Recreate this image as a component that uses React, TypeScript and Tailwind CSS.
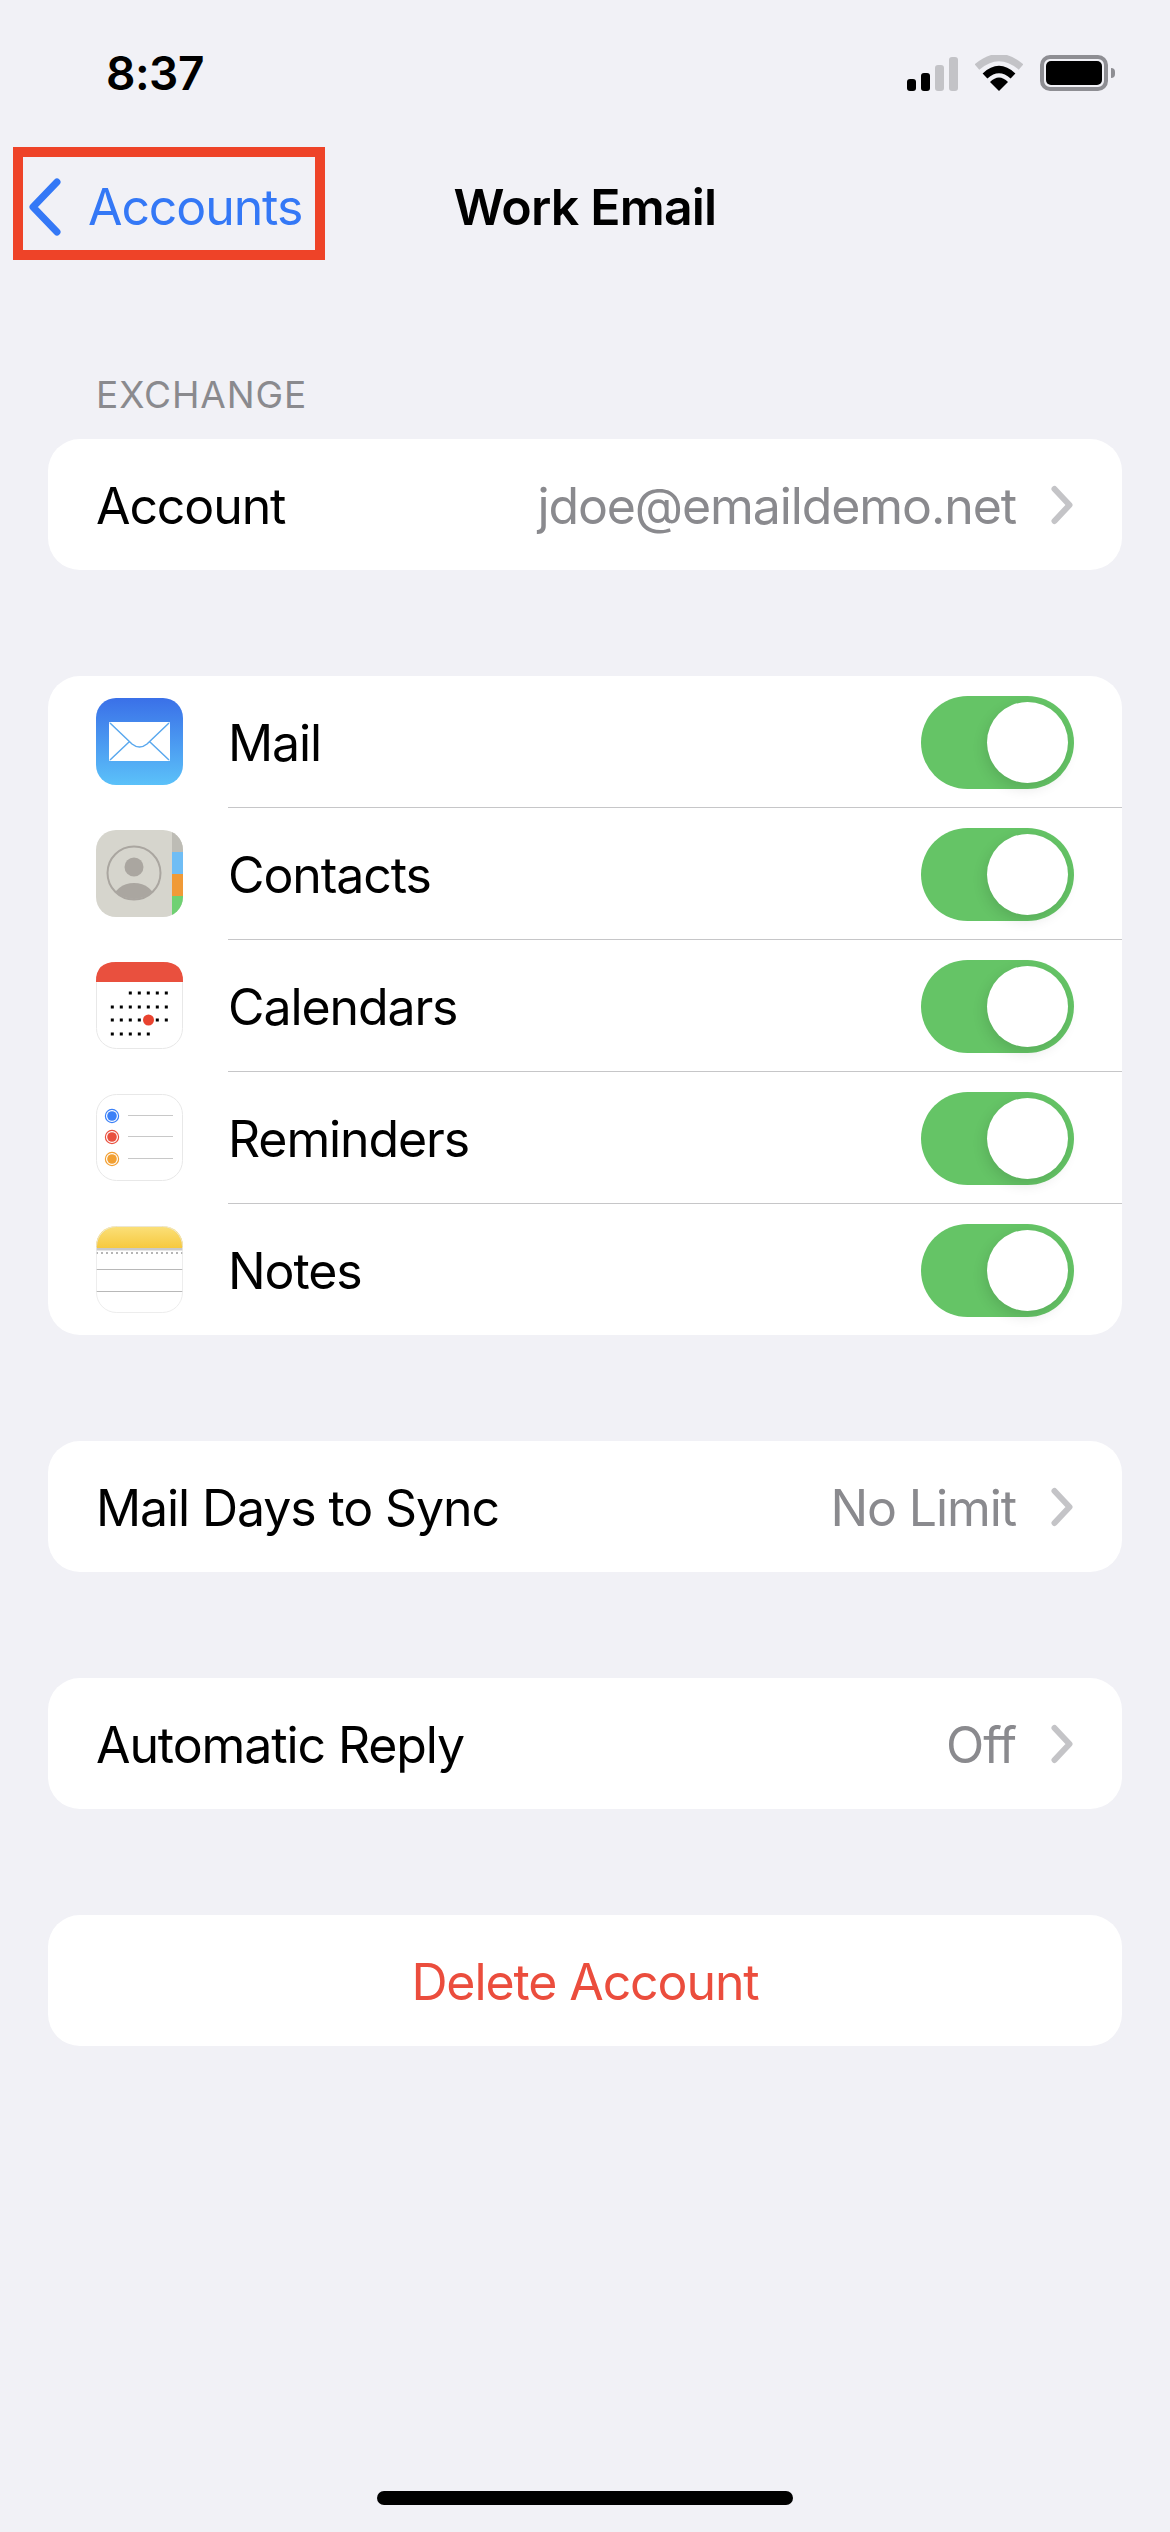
import React from "react";

type ToggleItem = {
  label: string;
  icon: React.ReactNode;
};

function MailIcon() {
  return (
    <svg viewBox="0 0 87 87" className="w-[87px] h-[87px] shrink-0 -mt-[1px]">
      <defs>
        <linearGradient id="mailBg" x1="0" y1="0" x2="0" y2="1">
          <stop offset="0" stopColor="#3a70e8" />
          <stop offset="1" stopColor="#5bc1f9" />
        </linearGradient>
      </defs>
      <rect width="87" height="87" rx="20" fill="url(#mailBg)" />
      <rect x="13" y="24" width="61" height="39" rx="1" fill="#fff" />
      <path
        d="M14 25 L36 46 Q43.500 52 51 46 L73 25 M14 62 L33 44 M73 62 L54 44"
        fill="none"
        stroke="#5aa8ee"
        strokeWidth="1.500"
      />
    </svg>
  );
}

function ContactsIcon() {
  return (
    <svg viewBox="0 0 87 87" className="w-[87px] h-[87px] shrink-0 -mt-[1px]">
      <defs>
        <clipPath id="contactsClip">
          <rect width="87" height="87" rx="20" />
        </clipPath>
        <clipPath id="faceClip">
          <circle cx="38" cy="43" r="26" />
        </clipPath>
      </defs>
      <g clipPath="url(#contactsClip)">
        <rect width="87" height="87" fill="#d6d5cd" />
        <rect x="76" y="0" width="11" height="22" fill="#bdbcb5" />
        <rect x="76" y="22" width="11" height="22" fill="#6fbdf5" />
        <rect x="76" y="44" width="11" height="22" fill="#f09a37" />
        <rect x="76" y="66" width="11" height="21" fill="#6fd172" />
      </g>
      <circle cx="38" cy="43" r="26.500" fill="none" stroke="#aaa6a0" strokeWidth="2" />
      <circle cx="38" cy="37" r="9.500" fill="#aaa6a0" />
      <ellipse cx="38" cy="70" rx="21" ry="17" fill="#aaa6a0" clipPath="url(#faceClip)" />
    </svg>
  );
}

function CalendarsIcon() {
  const rows = [
    { y: 31, cols: [34.3, 43.3, 52.3, 61.3, 70.3] },
    { y: 45, cols: [16.3, 25.3, 34.3, 43.3, 52.3, 61.3, 70.3] },
    { y: 58, cols: [16.3, 25.3, 34.3, 43.3, 61.3, 70.3] },
    { y: 72, cols: [16.3, 25.3, 34.3, 43.3, 52.3] },
  ];
  return (
    <svg viewBox="0 0 87 87" className="w-[87px] h-[87px] shrink-0 -mt-[1px]">
      <defs>
        <clipPath id="calClip">
          <rect width="87" height="87" rx="20" />
        </clipPath>
      </defs>
      <g clipPath="url(#calClip)">
        <rect width="87" height="87" fill="#fff" />
        <rect width="87" height="20" fill="#e9503e" />
      </g>
      <rect x="0.500" y="0.500" width="86" height="86" rx="20" fill="none" stroke="#e8e8e8" />
      <path d="M0 20 V19 Q0 0 20 0 H67 Q87 0 87 19 V20 Z" fill="#e9503e" />
      {rows.map((row) =>
        row.cols.map((x) => (
          <rect key={`${row.y}-${x}`} x={x - 1.500} y={row.y - 1.500} width="3" height="3" fill="#000" />
        ))
      )}
      <circle cx="52.500" cy="58" r="5.500" fill="#e9432f" />
    </svg>
  );
}

function RemindersIcon() {
  const dots = [
    { y: 22, color: "#3b80f7" },
    { y: 43, color: "#e9503e" },
    { y: 65, color: "#f2a033" },
  ];
  return (
    <svg viewBox="0 0 87 87" className="w-[87px] h-[87px] shrink-0 -mt-[1px]">
      <rect x="0.500" y="0.500" width="86" height="86" rx="20" fill="#fff" stroke="#e8e8e8" />
      {dots.map((d) => (
        <g key={d.y}>
          <circle cx="16" cy={d.y} r="6.600" fill="none" stroke={d.color} strokeWidth="1.200" />
          <circle cx="16" cy={d.y} r="4.800" fill={d.color} />
          <line x1="32" x2="77" y1={d.y - 0.500} y2={d.y - 0.500} stroke="#c8c8c8" strokeWidth="1" />
        </g>
      ))}
    </svg>
  );
}

function NotesIcon() {
  return (
    <svg viewBox="0 0 87 87" className="w-[87px] h-[87px] shrink-0 -mt-[1px]">
      <defs>
        <linearGradient id="notesBg" x1="0" y1="0" x2="0" y2="1">
          <stop offset="0" stopColor="#fbe07a" />
          <stop offset="1" stopColor="#f6c93f" />
        </linearGradient>
        <clipPath id="notesClip">
          <rect width="87" height="87" rx="20" />
        </clipPath>
      </defs>
      <g clipPath="url(#notesClip)">
        <rect width="87" height="87" fill="#fff" />
        <rect width="87" height="22" fill="url(#notesBg)" />
        <rect y="22" width="87" height="2.500" fill="#c9c9c9" />
        <line x1="0" x2="87" y1="27" y2="27" stroke="#b5b5b5" strokeWidth="2" strokeDasharray="2 3" />
        <line x1="0" x2="87" y1="43.500" y2="43.500" stroke="#b8b8b8" strokeWidth="1" />
        <line x1="0" x2="87" y1="65.500" y2="65.500" stroke="#b8b8b8" strokeWidth="1" />
      </g>
      <rect x="0.500" y="0.500" width="86" height="86" rx="20" fill="none" stroke="#e8e8e8" strokeOpacity="0.800" />
    </svg>
  );
}

function Toggle() {
  return (
    <div className="relative w-[153px] h-[93px] rounded-full bg-[#65c466] shrink-0">
      <div className="absolute left-[66px] top-[6px] w-[81px] h-[81px] rounded-full bg-white shadow-[-2px_5px_14px_rgba(0,0,0,0.12)]" />
    </div>
  );
}

function Chevron() {
  return (
    <svg viewBox="0 0 24 40" className="w-[24px] h-[40px] shrink-0 ml-[34px]">
      <path
        d="M4.500 4 L19.500 20 L4.500 36"
        fill="none"
        stroke="#c4c4c7"
        strokeWidth="6"
        strokeLinecap="round"
        strokeLinejoin="round"
      />
    </svg>
  );
}

function LinkRow({ label, value }: { label: string; value: string }) {
  return (
    <div className="flex items-center h-[131px] rounded-[32px] bg-white pl-[48px] pr-[48px]">
      <span className="pt-[2px] text-black">{label}</span>
      <span className="pt-[2px] ml-auto text-[#8a8a8e]">{value}</span>
      <Chevron />
    </div>
  );
}

const toggles: ToggleItem[] = [
  { label: "Mail", icon: <MailIcon /> },
  { label: "Contacts", icon: <ContactsIcon /> },
  { label: "Calendars", icon: <CalendarsIcon /> },
  { label: "Reminders", icon: <RemindersIcon /> },
  { label: "Notes", icon: <NotesIcon /> },
];

export default function App() {
  return (
    <div
      className="relative flex flex-col w-[1170px] min-h-[2532px] bg-[#f1f1f6] text-[50px] tracking-[-1.1px] leading-[60px]"
      style={{ fontFamily: "Inter, 'Liberation Sans', sans-serif" }}
    >
      {/* status bar */}
      <div className="flex items-center justify-between h-[146px] pl-[106px] pr-[55px]">
        <span className="text-[46px] font-semibold tracking-[-0.5px] text-black">8:37</span>
        <div className="flex items-end gap-[17px]">
          <div className="flex items-end gap-[5px]">
            <div className="w-[9px] h-[12px] rounded-[3px] bg-black" />
            <div className="w-[9px] h-[18px] rounded-[3px] bg-black" />
            <div className="w-[9px] h-[26px] rounded-[3px] bg-[#c3c3c7]" />
            <div className="w-[9px] h-[34px] rounded-[3px] bg-[#c3c3c7]" />
          </div>
          <svg viewBox="0 0 48 36" className="w-[48px] h-[36px]">
            <path d="M2 12 Q24 -7 46 12" fill="none" stroke="#c3c3c7" strokeWidth="7" />
            <path d="M10 21 Q24 8 38 21" fill="none" stroke="#000" strokeWidth="7" />
            <path d="M15 27 Q24 18 33 27 L24 36 Z" fill="#000" />
          </svg>
          <div className="flex items-center gap-[3px]">
            <div className="w-[68px] h-[36px] rounded-[10px] border-[4px] border-[#8e8e93] p-[2px]">
              <div className="w-full h-full rounded-[5px] bg-black" />
            </div>
            <div className="w-[4px] h-[10px] rounded-r-full bg-[#8e8e93]" />
          </div>
        </div>
      </div>

      {/* nav bar */}
      <div className="grid grid-cols-[1fr_auto_1fr] items-center h-[122px] px-[28px]">
        <div className="flex items-center gap-[26px] text-[#3478f6]">
          <svg viewBox="0 0 34 58" className="w-[34px] h-[58px] shrink-0">
            <path
              d="M29 4 L5 29 L29 54"
              fill="none"
              stroke="#3478f6"
              strokeWidth="7"
              strokeLinecap="round"
              strokeLinejoin="round"
            />
          </svg>
          <span>Accounts</span>
        </div>
        <span className="font-semibold tracking-[-0.8px] text-black">Work Email</span>
        <div />
      </div>

      {/* highlight round the back button */}
      <div className="absolute left-[13px] top-[147px] w-[312px] h-[113px] border-[10px] border-[#ee4328]" />

      <div className="flex flex-col px-[48px] pt-[104px]">
        <div className="h-[67px] pl-[48px] pt-[1px] text-[37px] leading-[44px] tracking-[0.9px] text-[#8a8a8e]">EXCHANGE</div>
        <LinkRow label="Account" value="jdoe@emaildemo.net" />

        <div className="flex flex-col mt-[106px] rounded-[32px] bg-white overflow-hidden">
          {toggles.map((item, index) => (
            <div key={item.label} className="flex items-center pl-[48px]">
              {item.icon}
              <div
                className={`flex items-center justify-between flex-1 ml-[45px] pr-[48px] pt-[2px] ${
                  index < toggles.length - 1 ? "h-[132px] border-b border-[#c6c6c8]" : "h-[131px]"
                }`}
              >
                <span className="text-black">{item.label}</span>
                <Toggle />
              </div>
            </div>
          ))}
        </div>

        <div className="mt-[106px]">
          <LinkRow label="Mail Days to Sync" value="No Limit" />
        </div>
        <div className="mt-[106px]">
          <LinkRow label="Automatic Reply" value="Off" />
        </div>
        <div className="flex items-center justify-center h-[131px] mt-[106px] rounded-[32px] bg-white text-[#eb4d3d]">
          <span className="pt-[2px]">Delete Account</span>
        </div>
      </div>

      {/* home indicator */}
      <div className="mt-auto mb-[27px] mx-auto w-[416px] h-[14px] rounded-full bg-black" />
    </div>
  );
}
